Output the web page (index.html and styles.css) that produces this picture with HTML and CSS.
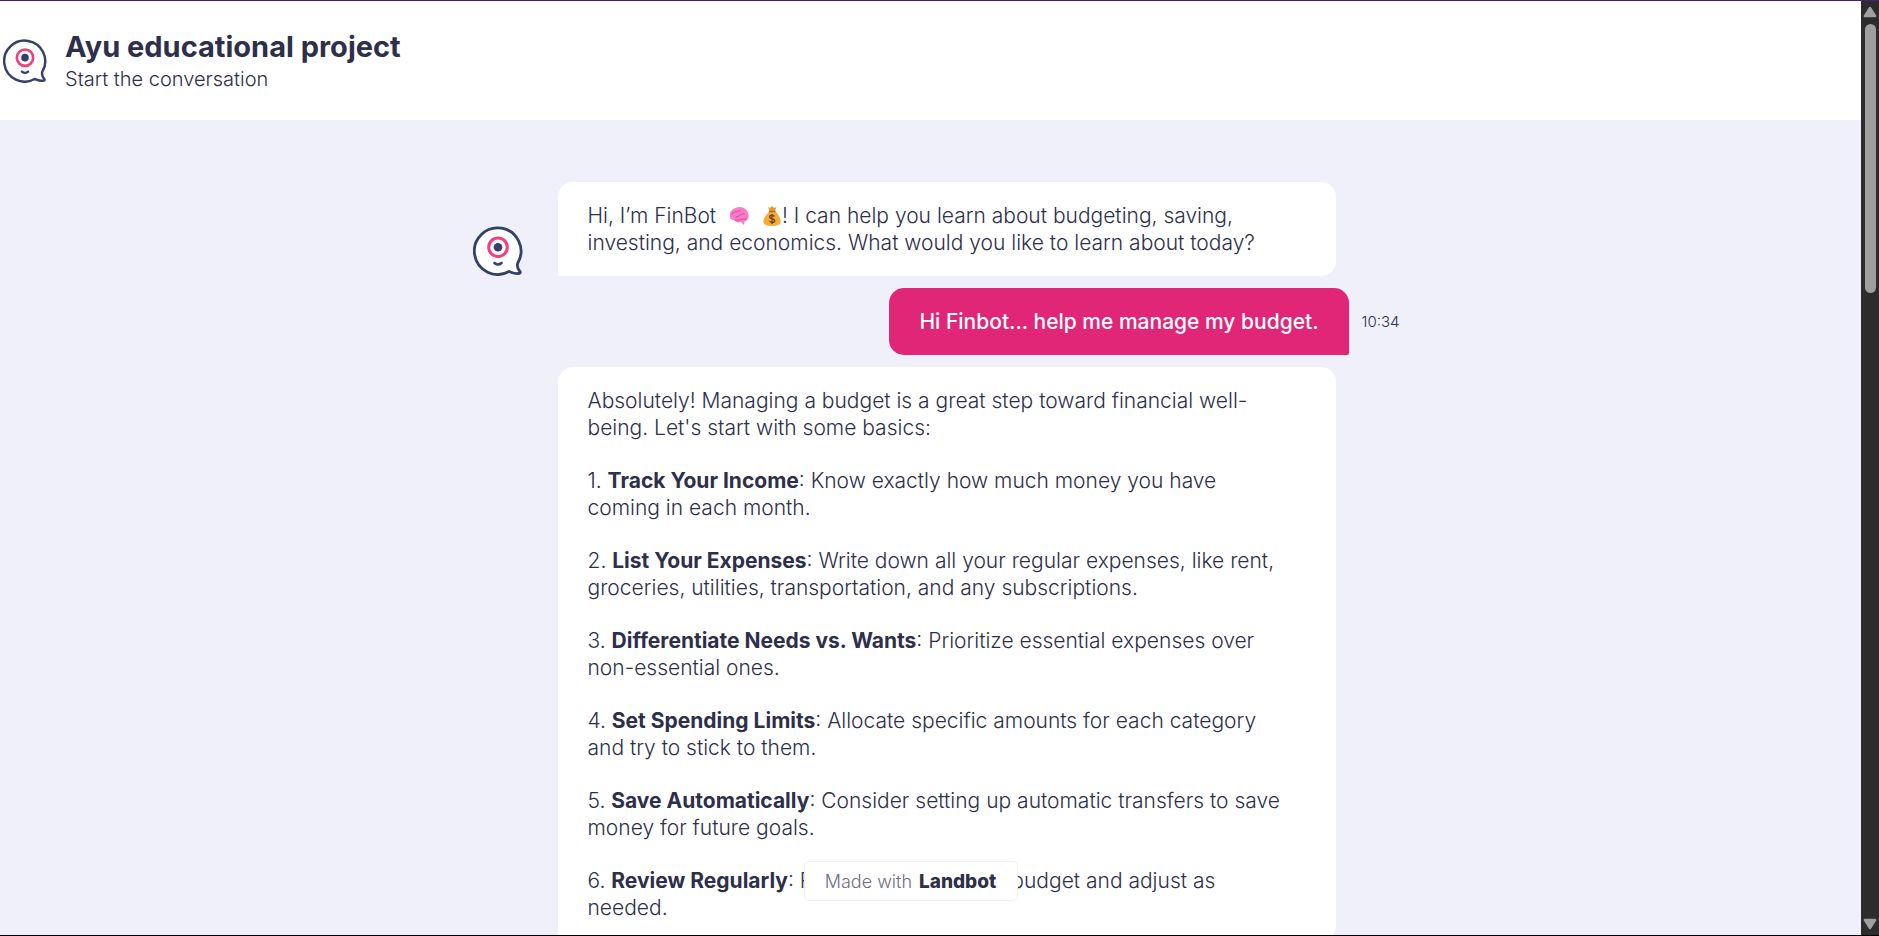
FILE: index.html
```html
<!DOCTYPE html>
<html lang="en">

<head>
  <meta charset="utf-8">
  <title>Ayu educational project</title>
  <link rel="stylesheet" href="styles.css">
</head>

<body>
  <svg class="symbols" aria-hidden="true">
    <symbol id="bot" viewBox="0 0 50 50">
      <path d="M36 45.500A23.300 23.300 0 1 1 45 36.500Q43 41 47 45.500Q48 47.500 45 47.500C41 47.800 39 46.500 36 45.500Z" fill="#fff" stroke="#33406a" stroke-width="2.800" stroke-linejoin="round"/>
      <circle cx="25" cy="21.200" r="9.300" fill="#fff" stroke="#f43f7f" stroke-width="3"/>
      <circle cx="25" cy="21.200" r="4.300" fill="#33406a"/>
      <path d="M21.500 37Q25 40 28.500 37" fill="none" stroke="#33406a" stroke-width="2.600" stroke-linecap="round"/>
    </symbol>
  </svg>

  <div class="page">
    <div class="chat">
      <header class="header">
        <svg class="header-logo" role="img" aria-label="Ayu bot"><use href="#bot"/></svg>
        <div>
          <h1 class="title">Ayu educational project</h1>
          <p class="subtitle">Start the conversation</p>
        </div>
      </header>

      <main class="messages">
        <div class="row">
          <svg class="avatar" role="img" aria-label="FinBot"><use href="#bot"/></svg>
          <div class="bubble">
            <p>Hi, I’m FinBot
              <svg class="emoji" viewBox="0 0 20 20" role="img" aria-label="brain">
                <path d="M1 11C0 7 3 2 8 1.500C13 0 19 3 19.500 9C20 12 18 15 15.500 15.500L15 19L12 16C9 17 6 16 6 14C3 14.500 1 13 1 11Z" fill="#fd7cc8"/>
                <path d="M3 8C5 4 9 7 11 4M7 11C11 11 11 7 15 8M6 14C10 15 12 12 17 13" fill="none" stroke="#df55ad" stroke-width="1.300" stroke-linecap="round"/>
              </svg>
              <svg class="emoji" viewBox="0 0 20 20" role="img" aria-label="money bag">
                <path d="M6 1L8 2L10 0L12 2L14.500 1L13 5H7.500Z" fill="#e99a24"/>
                <path d="M7.500 5H13C16 8 19 12 18.500 16C18 19 15 20 10 20S2 19 1.500 16C1 12 5 8 7.500 5Z" fill="#f7ad35"/>
                <path d="M7 5.500H13.500" stroke="#b96b1d" stroke-width="1.500"/>
                <path d="M12.500 10.500C11 8.500 7.500 9 7.500 11C7.500 13.500 12.700 12 12.700 14.700C12.700 17 8.500 17 7.300 15M10 8V18" fill="none" stroke="#704827" stroke-width="1.400"/>
              </svg>! I can help you learn about budgeting, saving,<br>investing, and economics. What would you like to learn about today?</p>
          </div>
        </div>

        <div class="row row-user">
          <div class="bubble bubble-user">
            <p>Hi Finbot... help me manage my budget.</p>
          </div>
          <time class="time">10:34</time>
        </div>

        <div class="row">
          <div class="avatar"></div>
          <div class="bubble">
            <p>Absolutely! Managing a budget is a great step toward financial well-<br>being. Let's start with some basics:</p>
            <p>1. <strong>Track Your Income</strong>: Know exactly how much money you have<br>coming in each month.</p>
            <p>2. <strong>List Your Expenses</strong>: Write down all your regular expenses, like rent,<br>groceries, utilities, transportation, and any subscriptions.</p>
            <p>3. <strong>Differentiate Needs vs. Wants</strong>: Prioritize essential expenses over<br>non-essential ones.</p>
            <p>4. <strong>Set Spending Limits</strong>: Allocate specific amounts for each category<br>and try to stick to them.</p>
            <p>5. <strong>Save Automatically</strong>: Consider setting up automatic transfers to save<br>money for future goals.</p>
            <p>6. <strong>Review Regularly</strong>: Regularly check your budget and adjust as<br>needed.</p>
          </div>
        </div>
      </main>

      <a class="badge" href="#">Made with <b>Landbot</b></a>
    </div>

    <div class="scrollbar">
      <button class="scroll-btn" aria-label="Scroll up">
        <svg viewBox="0 0 12 10"><path d="M6 1.500L10.500 8.500H1.500Z"/></svg>
      </button>
      <div class="track"><div class="thumb"></div></div>
      <button class="scroll-btn" aria-label="Scroll down">
        <svg viewBox="0 0 12 10"><path d="M6 8.500L1.500 1.500H10.500Z"/></svg>
      </button>
    </div>
  </div>
</body>

</html>
```

FILE: styles.css
```css
* {
    box-sizing: border-box;
}
body {
    margin: 0;
    font-family: Inter, "Open Sans", sans-serif;
    font-size: 21px;
    font-weight: 300;
    line-height: 27px;
    color: #2d2f4b;
}
h1, p {
    margin: 0;
}
.symbols {
    position: absolute;
    width: 0;
    height: 0;
}
.page {
    display: flex;
    height: 100vh;
    overflow: hidden;
    border-top: 1px solid #43207c;
    border-bottom: 1px solid #000;
}
.chat {
    position: relative;
    flex: 1;
    min-width: 0;
    overflow: hidden;
    background: #f0f0fa;
}

/* header */
.header {
    display: flex;
    align-items: center;
    gap: 18px;
    height: 119px;
    padding-left: 3px;
    background: #fff;
}
.header-logo {
    width: 44px;
    height: 44px;
}
.title {
    font-size: 29px;
    font-weight: 700;
    line-height: 36px;
}
.subtitle {
    font-size: 20px;
    line-height: 28px;
}

/* messages */
.messages {
    display: flex;
    flex-direction: column;
    gap: 12px;
    max-width: 940px;
    margin: 0 auto;
    padding-top: 62px;
}
.row {
    display: flex;
    align-items: flex-end;
    gap: 35px;
    padding: 0 65px 0 12px;
}
.row-user {
    justify-content: flex-end;
    align-items: center;
    gap: 13px;
    padding: 0;
}
.avatar {
    flex: none;
    width: 50px;
    height: 50px;
}
.bubble {
    flex: 1;
    padding: 20px 30px;
    background: #fff;
    border-radius: 15px 15px 15px 2px;
}
.bubble p + p {
    margin-top: 26px;
}
.bubble strong {
    font-weight: 700;
}
.bubble-user {
    flex: none;
    color: #fff;
    font-weight: 500;
    background: #e12677;
    border-radius: 15px 15px 2px 15px;
}
.time {
    width: 39px;
    font-size: 15px;
    color: #2d2f4b;
}
.emoji {
    width: 20px;
    height: 20px;
    margin-left: 7px;
    vertical-align: -3px;
}

.badge {
    position: absolute;
    bottom: 34px;
    left: calc(50% - 20px);
    transform: translateX(-50%);
    display: flex;
    justify-content: center;
    align-items: center;
    gap: 7px;
    width: 214px;
    height: 40px;
    font-size: 18px;
    color: #6e6f82;
    text-decoration: none;
    background: #fff;
    border: 1px solid #f0f0f3;
    border-radius: 5px;
}
.badge b {
    font-size: 19px;
    font-weight: 800;
    color: #2d2f4b;
}

/* scrollbar */
.scrollbar {
    display: flex;
    flex-direction: column;
    width: 18px;
    background: #2c2c2c;
}
.scroll-btn {
    display: flex;
    justify-content: center;
    align-items: center;
    height: 22px;
    padding: 0;
    border: none;
    background: none;
}
.scroll-btn svg {
    width: 14px;
    height: 12px;
    fill: #9f9f9f;
    stroke: #9f9f9f;
    stroke-width: 2;
    stroke-linejoin: round;
}
.track {
    flex: 1;
    padding-top: 1px;
}
.thumb {
    width: 11px;
    height: 269px;
    margin: 0 auto;
    background: #9f9f9f;
    border-radius: 6px;
}
```
